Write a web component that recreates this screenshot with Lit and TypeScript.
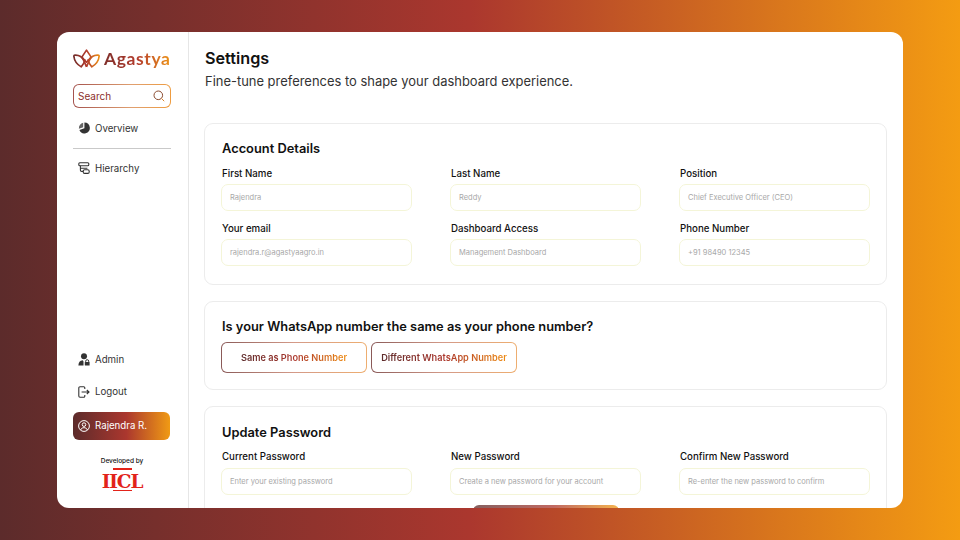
import { LitElement, html, css } from "lit";
import { customElement } from "lit/decorators.js";

const accountFields = [
  ["First Name", "Rajendra"],
  ["Last Name", "Reddy"],
  ["Position", "Chief Executive Officer (CEO)"],
  ["Your email", "rajendra.r@agastyaagro.in"],
  ["Dashboard Access", "Management Dashboard"],
  ["Phone Number", "+91 98490 12345"],
];

const passwordFields = [
  ["Current Password", "Enter your existing password"],
  ["New Password", "Create a new password for your account"],
  ["Confirm New Password", "Re-enter the new password to confirm"],
];

const icons = {
  search: html`<svg width="12" height="12" viewBox="0 0 12 12" fill="none" stroke="#8a4a2e" stroke-width="1"><circle cx="5.3" cy="5.3" r="4.3"/><path d="M8.5 8.5 11.2 11.2" stroke="#d9822b"/></svg>`,
  overview: html`<svg width="12" height="12" viewBox="0 0 12 12" fill="#333"><path d="M6.4.6a5.4 5.4 0 1 1-5 7.4l5-1.8z"/><path d="M5.2.8v4.5L.9 6.8A5.4 5.4 0 0 1 5.2.8z" fill="#666"/></svg>`,
  hierarchy: html`<svg width="12" height="13" viewBox="0 0 12 13" fill="none" stroke="#333" stroke-width="1.1"><rect x=".8" y=".8" width="10" height="3" rx="1"/><path d="M2.4 3.8v4.4c0 .8.5 1.2 1.2 1.2h1.6M2.4 6.2h7"/><rect x="5.2" y="7.8" width="6" height="3.6" rx="1.4"/></svg>`,
  admin: html`<svg width="12" height="13" viewBox="0 0 12 13" fill="#333"><circle cx="6" cy="3.2" r="3"/><path d="M.4 12.4c0-2.8 1.4-5 4.4-5.2L5.5 8.4v4z"/><rect x="6.8" y="9" width="4.8" height="3.4" rx=".5"/><path d="M7.7 9V8.2a1.5 1.5 0 0 1 3 0V9" fill="none" stroke="#333"/></svg>`,
  logout: html`<svg width="12" height="12" viewBox="0 0 12 12" fill="none" stroke="#333" stroke-width="1.1"><path d="M6.8 3V1.8c0-.6-.4-1-1-1H2c-.7 0-1.2.5-1.2 1.2v8c0 .7.5 1.2 1.2 1.2h3.8c.6 0 1-.4 1-1V9"/><path d="M3.6 6h7M8.8 4l2.2 2-2.2 2"/></svg>`,
  user: html`<svg width="12" height="12" viewBox="0 0 12 12" fill="none" stroke="#fff" stroke-width="1"><circle cx="6" cy="6" r="5.4"/><circle cx="6" cy="4.6" r="1.8"/><path d="M2.6 10c.5-1.6 1.8-2.3 3.4-2.3s2.9.7 3.4 2.3"/></svg>`,
  logo: html`<svg width="27" height="19" viewBox="0 0 29 20" fill="none" stroke-width="1.8" stroke-linejoin="round">
    <defs><linearGradient id="lg" gradientUnits="userSpaceOnUse" x1="0" x2="29" y1="0" y2="0"><stop offset="0" stop-color="#6e2c2a"/><stop offset=".5" stop-color="#b23a2c"/><stop offset="1" stop-color="#ee9418"/></linearGradient></defs>
    <path stroke="url(#lg)" d="M14.5 1 19.5 8.5 14.5 14 9.5 8.5z"/>
    <path stroke="url(#lg)" d="M.8 6.5c4.5-.6 9 1.5 11 6l2.7 6.5M28.2 6.5c-4.5-.6-9 1.5-11 6l-2.7 6.5"/>
    <path stroke="url(#lg)" d="M.8 6.5c.3 5 2.8 9.5 8 12.5 2-2 3.5-5 4.2-8M28.2 6.5c-.3 5-2.8 9.5-8 12.5-2-2-3.5-5-4.2-8"/>
  </svg>`,
};

@customElement("app-root")
export class AppRoot extends LitElement {
  static styles = css`
    :host {
      display: block;
      width: 960px;
      height: 540px;
      box-sizing: border-box;
      padding: 32px 57px;
      overflow: hidden;
      background: linear-gradient(90deg, #5c2b2b 0%, #ab372e 49%, #f49c12 100%);
      font-family: Inter, "Liberation Sans", sans-serif;
      color: #111;
    }
    .window {
      display: flex;
      height: 476px;
      background: #fff;
      border-radius: 12px;
      overflow: hidden;
    }
    .side {
      flex: 0 0 132px;
      box-sizing: border-box;
      border-right: 1px solid #e6e6e6;
      padding: 16px 17px 0 16px;
      display: flex;
      flex-direction: column;
    }
    .brand {
      display: flex;
      align-items: center;
      gap: 4px;
      height: 21px;
      margin-bottom: 15px;
    }
    .brand span {
      font-family: Lato, sans-serif;
      font-size: 17.5px;
      font-weight: 700;
      letter-spacing: 0.6px;
      background: linear-gradient(90deg, #7f2f2b, #b33b2c 50%, #ee9418);
      -webkit-background-clip: text;
      background-clip: text;
      color: transparent;
    }
    .search {
      box-sizing: border-box;
      height: 24px;
      border: 1px solid transparent;
      border-radius: 6px;
      background: linear-gradient(#fff, #fff) padding-box,
        linear-gradient(90deg, #a5534e, #e0a070 60%, #ee9c40) border-box;
      display: flex;
      align-items: center;
      justify-content: space-between;
      padding: 0 5px 0 4px;
      font-size: 10px;
      color: #8c2f2b;
      margin-bottom: 9px;
    }
    .item {
      display: flex;
      align-items: center;
      gap: 5px;
      height: 22px;
      padding-left: 5px;
      font-size: 9.7px;
      color: #333;
    }
    .rule {
      height: 1px;
      background: #c9c9c9;
      margin: 9px 0 8px;
    }
    .spacer { flex: 1; }
    .gap { margin-top: 10px; }
    .me {
      box-sizing: border-box;
      height: 28px;
      margin: 9px 1px 0 0;
      border-radius: 6px;
      padding-left: 5px;
      display: flex;
      align-items: center;
      gap: 5px;
      font-size: 9.7px;
      color: #fff;
      background: linear-gradient(90deg, #5c2b2b, #ab372e 55%, #f09a14);
    }
    .dev {
      margin-top: 17px;
      text-align: center;
      font-size: 6.5px;
      line-height: 8px;
      font-weight: 500;
    }
    .iicl {
      display: flex;
      flex-direction: column;
      align-items: center;
      margin: 3.5px 0 17px;
    }
    .iicl i {
      width: 19px;
      height: 1.5px;
      background: #e2231a;
    }
    .iicl span {
      font-family: "DejaVu Serif", serif;
      font-weight: 700;
      font-size: 18.5px;
      line-height: 20px;
      letter-spacing: -1.1px;
      color: #e2231a;
      margin: 2px 0 -2px;
    }
    .main {
      flex: 1;
      min-width: 0;
      padding: 16px 16px 0 15px;
      overflow: hidden;
    }
    h1 {
      margin: 0 0 0 1px;
      font-size: 16.2px;
      line-height: 20px;
      font-weight: 600;
    }
    .sub {
      margin: 3px 0 32px 1px;
      font-size: 12.95px;
      line-height: 20px;
      color: #333;
    }
    .card {
      box-sizing: border-box;
      border: 1px solid #ececec;
      border-radius: 9px;
      padding: 17px 16px 18px;
      margin-bottom: 16px;
    }
    .card.short { padding-bottom: 16px; }
    .card.pw { padding-top: 18px; }
    h2 {
      margin: 0;
      padding-left: 1px;
      font-size: 12.85px;
      line-height: 16px;
      font-weight: 600;
    }
    .grid {
      display: grid;
      grid-template-columns: repeat(3, 191px);
      column-gap: 38px;
      row-gap: 11px;
      margin-top: 10px;
    }
    .pw .grid { margin-top: 9px; }
    .field label {
      display: block;
      padding-left: 1px;
      font-size: 9.7px;
      line-height: 14px;
      margin-bottom: 3px;
      font-weight: 500;
    }
    .pw .field label { margin-bottom: 4px; }
    .input {
      box-sizing: border-box;
      height: 27px;
      border: 1px solid #f4f5d8;
      border-radius: 7px;
      padding-left: 8px;
      display: flex;
      align-items: center;
      font-size: 7.5px;
      color: #a8a8a8;
    }
    .choice {
      display: flex;
      gap: 4px;
      margin-top: 7px;
    }
    .pick {
      box-sizing: border-box;
      width: 146px;
      height: 31px;
      border: 1px solid transparent;
      border-radius: 6px;
      display: flex;
      align-items: center;
      justify-content: center;
      background: linear-gradient(#fff, #fff) padding-box,
        linear-gradient(90deg, #8a5a58, #d49a88 50%, #eeae70) border-box;
      font-size: 9.2px;
      font-weight: 600;
    }
    .pick span {
      background: linear-gradient(90deg, #5c2b2b, #ab372e 50%, #ee8c14);
      -webkit-background-clip: text;
      background-clip: text;
      color: transparent;
    }
    .save {
      width: 146px;
      height: 30px;
      margin: 10px 0 0 252px;
      border-radius: 6px;
      opacity: 0.75;
      background: linear-gradient(90deg, #5c2b2b, #ab372e 55%, #f09a14);
    }
  `;

  private fields(list: string[][]) {
    return list.map(
      ([name, hint]) => html`<div class="field">
        <label>${name}</label>
        <div class="input">${hint}</div>
      </div>`
    );
  }

  render() {
    return html`
      <div class="window">
        <nav class="side">
          <div class="brand">${icons.logo}<span>Agastya</span></div>
          <div class="search">Search ${icons.search}</div>
          <div class="item">${icons.overview}Overview</div>
          <div class="rule"></div>
          <div class="item">${icons.hierarchy}Hierarchy</div>
          <div class="spacer"></div>
          <div class="item">${icons.admin}Admin</div>
          <div class="item gap">${icons.logout}Logout</div>
          <div class="me">${icons.user}Rajendra R.</div>
          <div class="dev">Developed by</div>
          <div class="iicl"><i></i><span>IICL</span><i></i></div>
        </nav>
        <main class="main">
          <h1>Settings</h1>
          <p class="sub">Fine-tune preferences to shape your dashboard experience.</p>
          <section class="card">
            <h2>Account Details</h2>
            <div class="grid">${this.fields(accountFields)}</div>
          </section>
          <section class="card short">
            <h2>Is your WhatsApp number the same as your phone number?</h2>
            <div class="choice">
              <div class="pick"><span>Same as Phone Number</span></div>
              <div class="pick"><span>Different WhatsApp Number</span></div>
            </div>
          </section>
          <section class="card pw">
            <h2>Update Password</h2>
            <div class="grid">${this.fields(passwordFields)}</div>
            <div class="save"></div>
          </section>
        </main>
      </div>
    `;
  }
}
